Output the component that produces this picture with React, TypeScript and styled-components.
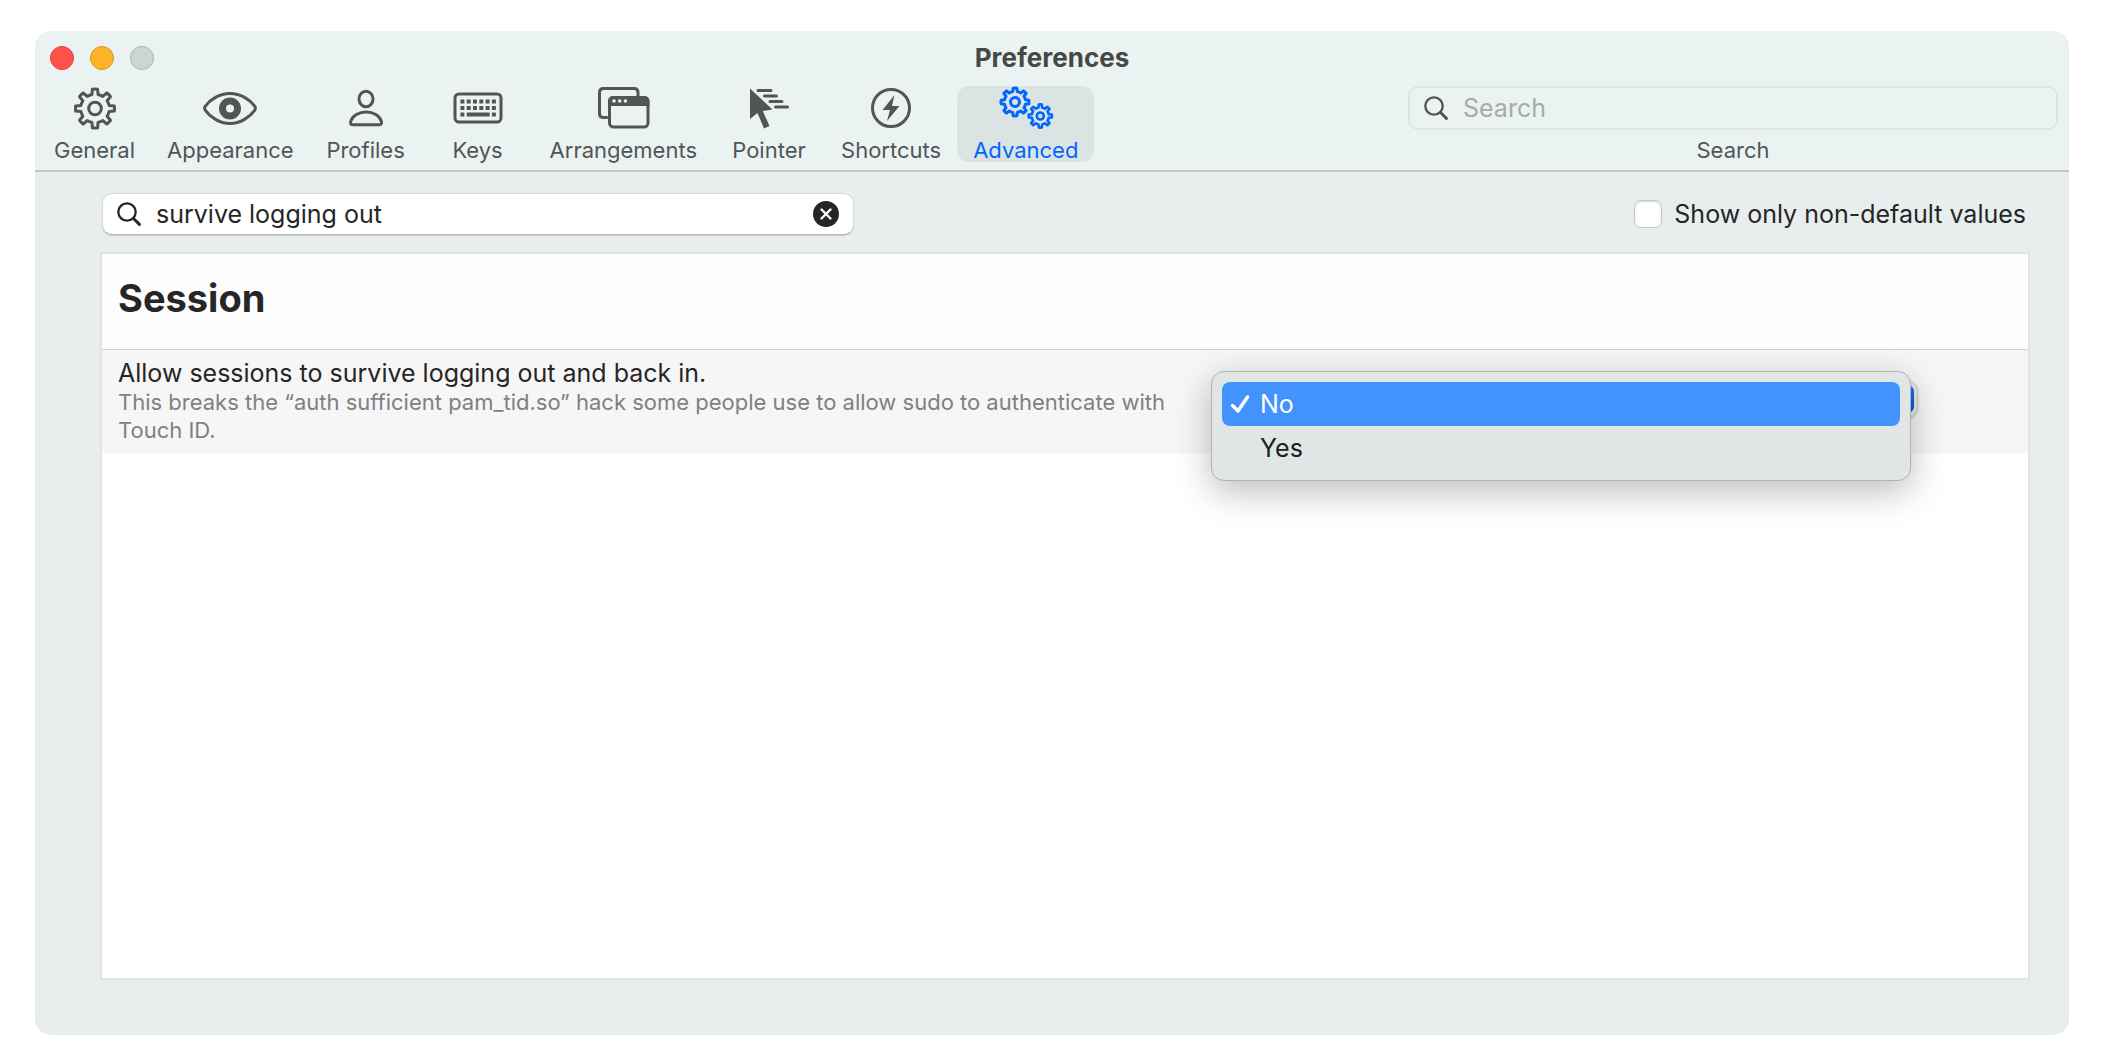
import React, { useState } from 'react';
import styled, { createGlobalStyle } from 'styled-components';

const ink = '#262626';
const icon = '#525555';
const accent = '#0066fe';

const GlobalStyle = createGlobalStyle`
  *, *::before, *::after { box-sizing: border-box; }
  body { margin: 0; background: #fff; }
  body, button, input, select { font-family: Inter, "Liberation Sans", sans-serif; }
`;

const Page = styled.main`
  display: flex;
  min-height: 100vh;
  padding: 31px 35px 27px;
`;

const Window = styled.section`
  flex: 1;
  min-width: 0;
  display: flex;
  flex-direction: column;
  border-radius: 16px;
  background: #e8eeee;
  overflow: hidden;
`;

const Header = styled.header`
  background: #eaf3f2;
  border-bottom: 2px solid #c0c8c7;
`;

const TitleBar = styled.div`
  display: grid;
  grid-template-columns: 1fr auto 1fr;
  align-items: center;
  height: 54px;
  padding: 0 15px;
`;

const Lights = styled.div`
  display: flex;
  gap: 16px;
`;

const Light = styled.button<{ $fill: string; $edge: string }>`
  width: 24px;
  height: 24px;
  padding: 0;
  border: 1px solid ${(p) => p.$edge};
  border-radius: 50%;
  background: ${(p) => p.$fill};
`;

const WindowTitle = styled.h1`
  margin: 0;
  font-size: 26px;
  line-height: 32px;
  font-weight: 700;
  color: #454848;
`;

const Toolbar = styled.div`
  display: flex;
  justify-content: space-between;
  align-items: flex-start;
  padding: 1px 11px 6px 3px;
`;

const Tabs = styled.nav`
  display: flex;
`;

const Tab = styled.button<{ $active?: boolean }>`
  display: flex;
  flex-direction: column;
  align-items: center;
  min-width: 112px;
  height: 76px;
  padding: 0 16px;
  border: 0;
  border-radius: 12px;
  background: ${(p) => (p.$active ? '#dce4e3' : 'transparent')};
  color: ${(p) => (p.$active ? accent : icon)};
  font-size: 22px;
  line-height: 24px;
  svg { display: block; margin-bottom: 8px; }
`;

const SearchItem = styled.div`
  display: flex;
  flex-direction: column;
  align-items: center;
  gap: 6px;
  width: 650px;
`;

const SearchLabel = styled.label`
  font-size: 22px;
  line-height: 28px;
  color: ${icon};
`;

const Field = styled.div<{ $solid?: boolean }>`
  display: flex;
  align-items: center;
  gap: 15px;
  width: 100%;
  height: ${(p) => (p.$solid ? 42 : 44)}px;
  padding: 0 14px;
  border-radius: 10px;
  border: ${(p) => (p.$solid ? '1px solid #d4d9d9' : '2px solid #dde5e4')};
  border-bottom-color: ${(p) => (p.$solid ? '#b3b8b8' : '#dde5e4')};
  background: ${(p) => (p.$solid ? '#fff' : 'transparent')};
  box-shadow: ${(p) => (p.$solid ? '0 1px 1px #c4caca' : 'none')};
  color: ${(p) => (p.$solid ? ink : icon)};
`;

const FieldInput = styled.input`
  flex: 1;
  min-width: 0;
  padding: 0;
  border: 0;
  outline: 0;
  background: transparent;
  font-size: 25px;
  line-height: 30px;
  color: ${ink};
  &::placeholder { color: #a5abaa; opacity: 1; }
`;

const ClearButton = styled.button`
  display: flex;
  padding: 0;
  border: 0;
  background: transparent;
`;

const Content = styled.div`
  flex: 1;
  display: flex;
  flex-direction: column;
  padding: 21px 39px 55px 65px;
`;

const FilterBar = styled.div`
  display: flex;
  justify-content: space-between;
  align-items: center;
  padding: 0 4px 0 2px;
  margin-bottom: 17px;
`;

const FilterField = styled.div`
  width: 752px;
`;

const CheckLabel = styled.label`
  display: flex;
  align-items: center;
  gap: 12px;
  font-size: 25px;
  line-height: 30px;
  color: ${ink};
`;

const CheckBox = styled.input`
  appearance: none;
  width: 28px;
  height: 28px;
  margin: 0;
  border: 1px solid #c3c7c7;
  border-radius: 7px;
  background: #fff;
  box-shadow: inset 0 1px 2px #d8d8d8;
`;

const Panel = styled.div`
  flex: 1;
  border: 2px solid #e3e3e3;
  background: #fff;
`;

const SectionTitle = styled.h2`
  margin: 0;
  padding: 20px 16px 27px;
  border-bottom: 1px solid #d2d2d2;
  background: #fdfdfd;
  font-size: 38px;
  line-height: 48px;
  font-weight: 700;
  color: ${ink};
`;

const Setting = styled.div`
  display: flex;
  align-items: flex-start;
  justify-content: space-between;
  padding: 8px 110px 10px 16px;
  background: #f6f6f6;
`;

const SettingText = styled.div`
  width: 1076px;
`;

const SettingName = styled.label`
  display: block;
  font-size: 25px;
  line-height: 30px;
  color: ${ink};
`;

const SettingNote = styled.p`
  margin: 0;
  font-size: 22px;
  line-height: 28px;
  color: #808080;
`;

const Chooser = styled.div`
  position: relative;
  width: 704px;
  padding-top: 22px;
`;

const ChooserSelect = styled.select`
  appearance: none;
  display: block;
  width: 100%;
  height: 38px;
  padding: 4px 3px;
  border: 1px solid #cfcfcf;
  border-radius: 11px;
  background: linear-gradient(#1a7bf5, #0050d8) right center / 30px 100% no-repeat content-box, #e9e9ea;
  box-shadow: 0 1px 2px #c8c8c8;
`;

const Menu = styled.div`
  position: absolute;
  top: 13px;
  left: -3px;
  right: 7px;
  padding: 10px;
  border: 1px solid #b0b3b3;
  border-radius: 13px;
  background: #e0e5e5;
  box-shadow: 0 10px 36px rgba(0, 0, 0, 0.27);
`;

const Option = styled.button<{ $selected: boolean }>`
  display: flex;
  align-items: center;
  width: 100%;
  height: 44px;
  padding: 0 8px;
  border: 0;
  border-radius: 8px;
  background: ${(p) => (p.$selected ? '#4393ff' : 'transparent')};
  color: ${(p) => (p.$selected ? '#fff' : '#1e2020')};
  font-size: 25px;
  line-height: 30px;
`;

const Tick = styled.span`
  display: flex;
  width: 30px;
`;

/** Rounded cog outline around a centre. */
function gearPath(cx: number, cy: number, outer: number, inner: number, teeth: number) {
  const step = (Math.PI * 2) / teeth;
  const at = (r: number, a: number) =>
    `${(cx + r * Math.sin(a)).toFixed(2)} ${(cy - r * Math.cos(a)).toFixed(2)}`;
  let d = '';
  for (let i = 0; i < teeth; i += 1) {
    const a = i * step;
    d += `${i ? 'L' : 'M'}${at(inner, a - step * 0.27)}L${at(outer, a - step * 0.17)}`;
    d += `A${outer} ${outer} 0 0 1 ${at(outer, a + step * 0.17)}L${at(inner, a + step * 0.27)}`;
    d += `A${inner} ${inner} 0 0 1 ${at(inner, a + step * 0.73)}`;
  }
  return `${d}Z`;
}

const stroke = {
  fill: 'none',
  stroke: 'currentColor',
  strokeWidth: 3,
  strokeLinejoin: 'round',
  strokeLinecap: 'round',
} as const;

const GearIcon = () => (
  <svg width="60" height="44" viewBox="0 0 60 44" {...stroke}>
    <path d={gearPath(30, 22.5, 19.5, 14.4, 8)} />
    <circle cx="30" cy="22.5" r="6.3" />
  </svg>
);

const EyeIcon = () => (
  <svg width="60" height="44" viewBox="0 0 60 44" {...stroke}>
    <path d="M5.2 20.300C10 13.500 19.500 7.500 30 7.500S50 13.500 54.800 20.300Q56 22.200 54.800 24.100C50 31 40.500 37.500 30 37.500S10 31 5.200 24.100Q4 22.200 5.200 20.300Z" />
    <circle cx="30" cy="22.500" r="7.500" strokeWidth="7" />
  </svg>
);

const PersonIcon = () => (
  <svg width="60" height="44" viewBox="0 0 60 44" {...stroke}>
    <ellipse cx="30" cy="13" rx="7" ry="7.8" />
    <path d="M16.500 38.800C14.500 38.800 14.300 37 14.800 35.200C16.500 29.500 23 26 30.200 26S43.500 29.500 45.300 35.200C45.800 37 45.500 38.800 43.500 38.800Z" />
  </svg>
);

const keyColumns = [0, 1, 2, 3, 4, 5];

const KeyboardIcon = () => (
  <svg width="60" height="44" viewBox="0 0 60 44">
    <rect x="7" y="8" width="46" height="28" rx="4" {...stroke} />
    <g fill="currentColor">
      {keyColumns.map((i) => (
        <React.Fragment key={i}>
          <rect x={12.4 + i * 6.3} y="13.5" width="4" height="4" rx="0.5" />
          <rect x={12.4 + i * 6.3} y="20" width="4" height="4" rx="0.5" />
        </React.Fragment>
      ))}
      <rect x="12.4" y="26.500" width="4" height="4" rx="0.5" />
      <rect x="18.700" y="26.500" width="23" height="4" rx="0.5" />
      <rect x="43.900" y="26.500" width="4" height="4" rx="0.5" />
    </g>
  </svg>
);

const WindowsIcon = () => (
  <svg width="60" height="44" viewBox="0 0 60 44" {...stroke}>
    <path d="M14 31.500H10.500Q6.500 31.500 6.500 27.500V6.500Q6.500 2.500 10.500 2.500H41Q45 2.500 45 6.500V10" />
    <rect x="16.500" y="11.500" width="38.500" height="29.500" rx="4" />
    <path d="M16.500 18.500V15.500Q16.500 11.500 20.500 11.500H51Q55 11.500 55 15.500V18.500Z" fill="currentColor" />
    <g fill="#eaf3f2" stroke="none">
      <circle cx="21" cy="15" r="1.800" />
      <circle cx="26.700" cy="15" r="1.800" />
      <circle cx="32.400" cy="15" r="1.800" />
    </g>
  </svg>
);

const PointerIcon = () => (
  <svg width="60" height="44" viewBox="0 0 60 44">
    <path d="M11 2.500L33.500 23.500L23.800 25L30.500 40L25 42.500L18.500 27L11 33Z" fill="currentColor" />
    <path d="M19 4.500H32M25.500 10H37.500M31 15.500H43M36.500 21H48.500" {...stroke} />
  </svg>
);

const BoltIcon = () => (
  <svg width="60" height="44" viewBox="0 0 60 44">
    <circle cx="30" cy="22" r="18.500" {...stroke} />
    <path d="M33.500 9L21.500 24H29L26 35L38.500 20H31Z" fill="currentColor" />
  </svg>
);

const GearsIcon = () => (
  <svg width="60" height="44" viewBox="0 0 60 44" {...stroke}>
    <path d={gearPath(19, 16, 14, 10.7, 8)} />
    <circle cx="19" cy="16" r="4.500" />
    <path d={gearPath(44.3, 30, 11.6, 8.6, 8)} strokeWidth="2.600" />
    <circle cx="44.300" cy="30" r="3.500" strokeWidth="2.600" />
  </svg>
);

const LensIcon = () => (
  <svg width="24" height="24" viewBox="0 0 24 24" {...stroke} strokeWidth="2.300">
    <circle cx="10" cy="10" r="8.700" />
    <path d="M16.500 16.500L22.400 22.400" strokeWidth="2.900" />
  </svg>
);

const tabs = [
  { name: 'General', Icon: GearIcon },
  { name: 'Appearance', Icon: EyeIcon },
  { name: 'Profiles', Icon: PersonIcon },
  { name: 'Keys', Icon: KeyboardIcon },
  { name: 'Arrangements', Icon: WindowsIcon },
  { name: 'Pointer', Icon: PointerIcon },
  { name: 'Shortcuts', Icon: BoltIcon },
  { name: 'Advanced', Icon: GearsIcon },
];

export default function App() {
  const [active, setActive] = useState('Advanced');
  const [query, setQuery] = useState('survive logging out');
  const [choice, setChoice] = useState('No');

  return (
    <Page>
      <GlobalStyle />
      <Window>
        <Header>
          <TitleBar>
            <Lights>
              <Light aria-label="Close" $fill="#ff524c" $edge="#dd403b" />
              <Light aria-label="Minimize" $fill="#feb429" $edge="#d6951e" />
              <Light aria-label="Zoom" $fill="#cdd5d4" $edge="#abb2b1" />
            </Lights>
            <WindowTitle>Preferences</WindowTitle>
          </TitleBar>
          <Toolbar>
            <Tabs>
              {tabs.map(({ name, Icon }) => (
                <Tab key={name} $active={active === name} onClick={() => setActive(name)}>
                  <Icon />
                  {name}
                </Tab>
              ))}
            </Tabs>
            <SearchItem>
              <Field>
                <LensIcon />
                <FieldInput id="toolbar-search" placeholder="Search" />
              </Field>
              <SearchLabel htmlFor="toolbar-search">Search</SearchLabel>
            </SearchItem>
          </Toolbar>
        </Header>
        <Content>
          <FilterBar>
            <FilterField>
              <Field $solid>
                <LensIcon />
                <FieldInput
                  aria-label="Filter settings"
                  value={query}
                  onChange={(e) => setQuery(e.target.value)}
                />
                <ClearButton aria-label="Clear" onClick={() => setQuery('')}>
                  <svg width="26" height="26" viewBox="0 0 26 26">
                    <circle cx="13" cy="13" r="13" fill={ink} />
                    <path
                      d="M8.5 8.5L17.5 17.5M17.5 8.5L8.5 17.5"
                      stroke="#fff"
                      strokeWidth="2.4"
                      strokeLinecap="round"
                    />
                  </svg>
                </ClearButton>
              </Field>
            </FilterField>
            <CheckLabel>
              <CheckBox type="checkbox" />
              Show only non-default values
            </CheckLabel>
          </FilterBar>
          <Panel>
            <SectionTitle>Session</SectionTitle>
            <Setting>
              <SettingText>
                <SettingName htmlFor="survive">Allow sessions to survive logging out and back in.</SettingName>
                <SettingNote>
                  This breaks the “auth sufficient pam_tid.so” hack some people use to allow sudo to authenticate with
                  Touch ID.
                </SettingNote>
              </SettingText>
              <Chooser>
                <ChooserSelect id="survive" value={choice} onChange={(e) => setChoice(e.target.value)}>
                  <option>No</option>
                  <option>Yes</option>
                </ChooserSelect>
                <Menu role="listbox" aria-label="Allow sessions to survive">
                  {['No', 'Yes'].map((name) => (
                    <Option
                      key={name}
                      role="option"
                      aria-selected={choice === name}
                      $selected={choice === name}
                      onClick={() => setChoice(name)}
                    >
                      <Tick>
                        {choice === name && (
                          <svg width="20" height="20" viewBox="0 0 20 20" {...stroke} strokeWidth="3.4">
                            <path d="M2.5 11.500L8 17L17.500 3" />
                          </svg>
                        )}
                      </Tick>
                      {name}
                    </Option>
                  ))}
                </Menu>
              </Chooser>
            </Setting>
          </Panel>
        </Content>
      </Window>
    </Page>
  );
}
